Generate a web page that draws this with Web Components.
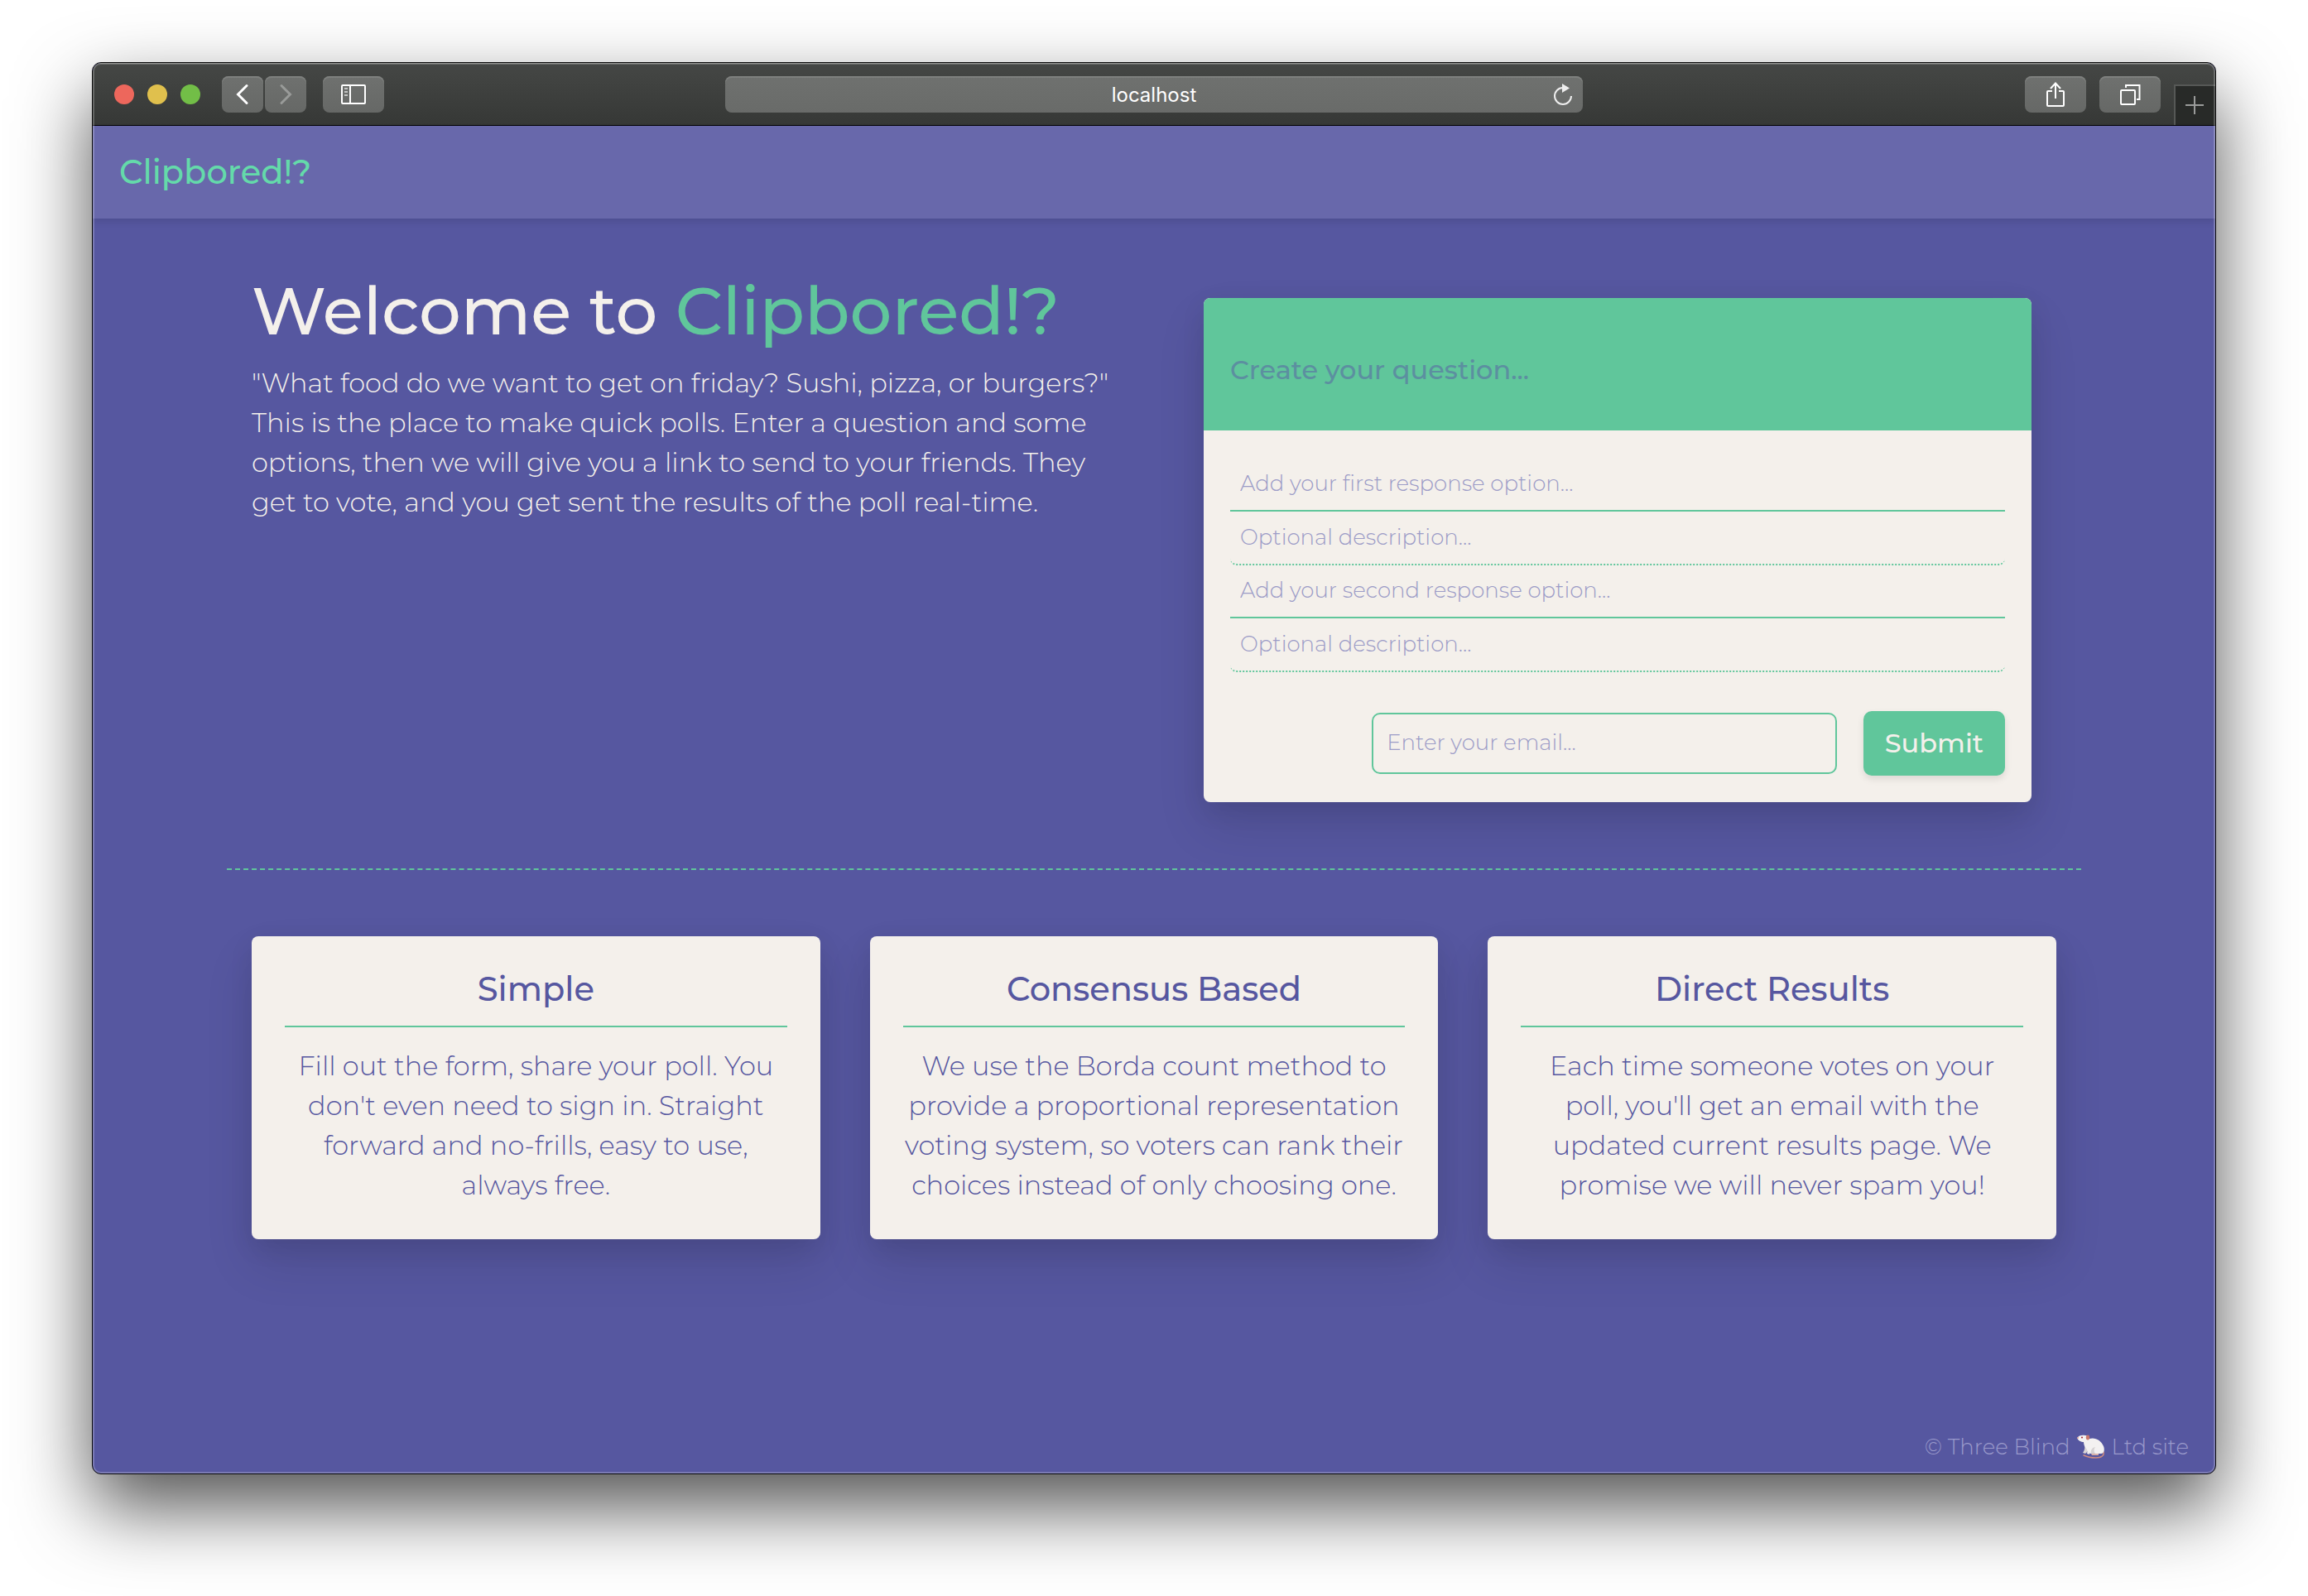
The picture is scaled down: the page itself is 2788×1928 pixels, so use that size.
<!DOCTYPE html>
<html lang="en">
<head>
<meta charset="utf-8">
<title>Clipbored!?</title>
<style>
  :root {
    --purple: #5657a0;
    --nav: #6868ab;
    --green: #60c69b;
    --mint: #64daaa;
    --cream: #f4f0eb;
    --placeholder: #9c9cc7;
    --card-shadow: 0 30px 60px rgba(0, 0, 0, .11), 0 10px 30px rgba(0, 0, 0, .08);
    --small-shadow: 0 4px 8px rgba(0, 0, 0, .1);
    --body-size: 32px;
    --title-size: 40px;
    --small-size: 26px;
  }
  body {
    margin: 0;
    min-height: 100vh;
    box-sizing: border-box;
    padding: 75px 111px 147px;
    display: flex;
    background: #fff;
    color: var(--cream);
    font-family: Montserrat, Inter, sans-serif;
    font-size: var(--body-size);
    font-weight: 300;
    line-height: 48px;
  }
</style>
</head>
<body>
<browser-window>
  <site-nav>Clipbored!?</site-nav>
  <page-hero>
    <span slot="lead">Welcome to</span>
    <span slot="brand">Clipbored!?</span>
    "What food do we want to get on friday? Sushi, pizza, or burgers?" This is the place to make quick polls. Enter a question and some options, then we will give you a link to send to your friends. They get to vote, and you get sent the results of the poll real-time.
    <poll-form slot="form"></poll-form>
  </page-hero>
  <feature-list>
    <feature-card><span slot="title">Simple</span>Fill out the form, share your poll. You don't even need to sign in. Straight forward and no-frills, easy to use, always free.</feature-card>
    <feature-card><span slot="title">Consensus Based</span>We use the Borda count method to provide a proportional representation voting system, so voters can rank their choices instead of only choosing one.</feature-card>
    <feature-card><span slot="title">Direct Results</span>Each time someone votes on your poll, you'll get an email with the updated current results page. We promise we will never spam you!</feature-card>
  </feature-list>
  <site-footer></site-footer>
</browser-window>

<script>
const define = (name, html) => {
  const template = document.createElement('template');
  template.innerHTML = html;
  customElements.define(name, class extends HTMLElement {
    constructor() {
      super();
      this.attachShadow({ mode: 'open' }).append(template.content.cloneNode(true));
    }
  });
};

define('browser-toolbar', `
<style>
  :host {
    display: grid; grid-template-columns: 1fr 1036px 1fr;
    height: 74px; align-items: center;
    background: linear-gradient(#454745, #363836);
    border-bottom: 1px solid #000;
    border-top: 1px solid #6d6f6c;
  }
  .left, .right { display: flex; align-items: center; }
  .left { padding-left: 26px; }
  .right { justify-content: flex-end; gap: 16px; align-self: stretch; }
  .light { width: 24px; height: 24px; border-radius: 50%; margin-right: 16px; }
  .red { background: #ed675c; } .yellow { background: #e0c04d; } .green { background: #72be47; }
  button {
    width: 74px; height: 44px; padding: 0; border: 0; border-radius: 8px;
    display: grid; place-items: center; color: #fff;
    background: linear-gradient(#6f716f, #666866);
    box-shadow: inset 0 2px 0 #7e807e;
  }
  .nav { width: 50px; }
  .back { margin-left: 10px; margin-right: 2px; }
  .side { margin-left: 20px; }
  .forward { color: #999b99; }
  .address {
    height: 44px; border-radius: 8px; box-sizing: border-box;
    display: grid; grid-template-columns: 48px 1fr 48px; align-items: center;
    background: linear-gradient(#6f716f, #696b69);
    box-shadow: inset 0 2px 0 #7e807e;
  }
  input {
    grid-column: 2; border: 0; padding: 2px 0 0; background: none; text-align: center; color: #fff;
    font: 400 24px/32px Inter, sans-serif; min-width: 0;
  }
  .reload { width: 48px; background: none; box-shadow: none; color: #eee; }
  .add {
    width: 50px; height: 49px; align-self: flex-end; border-radius: 0; color: #9a9b9a;
    background: #282a28; box-shadow: inset 2px 2px 0 #565856;
  }
  svg { fill: none; stroke: currentColor; stroke-width: 2; display: block; }
</style>
<div class="left">
  <span class="light red"></span><span class="light yellow"></span><span class="light green"></span>
  <button class="nav back" aria-label="Back"><svg width="24" height="26" viewBox="0 0 24 26" stroke-linecap="round"><path stroke-width="3" d="M17 2.500 6.500 13 17 23.500"/></svg></button>
  <button class="nav forward" aria-label="Forward"><svg width="24" height="26" viewBox="0 0 24 26" stroke-linecap="round"><path stroke-width="3" d="M7 2.500 17.500 13 7 23.500"/></svg></button>
  <button class="side" aria-label="Sidebar"><svg width="30" height="24" viewBox="0 0 30 24"><rect x="1" y="1" width="28" height="22" rx="1"/><path d="M11 1v22"/><path stroke="#c4c5c4" d="M4 5h4M4 9h4M4 13h4"/></svg></button>
</div>
<div class="address">
  <input type="text" aria-label="Address" value="localhost">
  <button class="reload" aria-label="Reload"><svg width="24" height="28" viewBox="0 0 24 28"><path d="M12 6a10 10 0 1 0 10 10"/><path fill="currentColor" stroke="none" d="M11 1v11l9-5.500z"/></svg></button>
</div>
<div class="right">
  <button aria-label="Share"><svg width="24" height="32" viewBox="0 0 24 32"><path d="M8 12H3q-1 0-1 1v16q0 1 1 1h18q1 0 1-1V13q0-1-1-1h-5M12 21V3M6 9l6-6.500L18 9"/></svg></button>
  <button aria-label="Tabs"><svg width="26" height="26" viewBox="0 0 26 26"><rect x="2" y="8" width="17" height="17" rx="1"/><path d="M8 5V2h16.500v17H21"/></svg></button>
  <button class="add" aria-label="New tab"><svg width="24" height="24" viewBox="0 0 24 24"><path d="M12 1v22M1 12h22"/></svg></button>
</div>`);

define('browser-window', `
<style>
  :host {
    flex: 1; min-width: 0; box-sizing: border-box; position: relative;
    display: flex; flex-direction: column; overflow: hidden;
    border: 1px solid #0b0b0b; border-radius: 11px; background: var(--purple);
    box-shadow: 0 40px 90px rgba(0, 0, 0, .68);
  }
  .rim {
    position: absolute; inset: 0; border-radius: 10px; pointer-events: none;
    box-shadow: inset 0 0 0 2px rgba(255, 255, 255, .22);
  }
</style>
<browser-toolbar></browser-toolbar>
<slot></slot>
<div class="rim"></div>`);

define('site-nav', `
<style>
  :host { display: flex; align-items: center; height: 112px; padding: 0 32px; background: var(--nav); box-shadow: var(--small-shadow); }
  a { color: var(--mint); text-decoration: none; font-size: var(--title-size); line-height: 48px; font-weight: 500; }
</style>
<a href="#"><slot></slot></a>`);

define('page-hero', `
<style>
  :host {
    width: 100%; max-width: 2240px; box-sizing: border-box; align-self: center;
    display: grid; grid-template-columns: 1fr 1fr; gap: 60px;
    padding: 64px 30px 80px; border-bottom: 2px dashed var(--green);
  }
  h1 { margin: 0 0 15px; font-size: 80px; line-height: 96px; font-weight: 500; white-space: nowrap; }
  .brand { color: var(--green); }
  p { margin: 0; }
  .form { padding: 32px 30px 0; }
</style>
<div>
  <h1><slot name="lead"></slot> <span class="brand"><slot name="brand"></slot></span></h1>
  <p><slot></slot></p>
</div>
<div class="form"><slot name="form"></slot></div>`);

define('poll-form', `
<style>
  :host { display: block; border-radius: 8px; box-shadow: var(--card-shadow); }
  form { border-radius: 8px; overflow: hidden; background: var(--cream); }
  header { background: var(--green); padding: 44px 32px 32px; }
  input {
    display: block; width: 100%; box-sizing: border-box; border: 0; outline: 0;
    background: none; color: var(--purple); font: inherit; font-size: var(--small-size);
  }
  input::placeholder { color: var(--placeholder); opacity: 1; }
  .question { height: 84px; padding: 0; font-size: var(--body-size); font-weight: 500; }
  .question::placeholder { color: #5c8fa0; }
  .body { padding: 34px 32px 32px; }
  .option, .detail { padding: 0 12px 2px; }
  .option { height: 64px; border-bottom: 2px solid var(--green); }
  .detail { height: 65px; border-bottom: 2px dotted var(--green); border-radius: 8px; }
  .send { display: flex; justify-content: flex-end; align-items: center; gap: 32px; margin-top: 47px; }
  .email { width: 60%; height: 74px; padding: 0 16px 2px; border: 2px solid var(--green); border-radius: 10px; }
  button {
    height: 78px; padding: 0 26px; border: 0; border-radius: 10px; background: var(--green);
    color: var(--cream); font: inherit; font-weight: 500; box-shadow: var(--small-shadow);
  }
</style>
<form>
  <header><input class="question" aria-label="Question" placeholder="Create your question..."></header>
  <div class="body">
    <input class="option" aria-label="First option" placeholder="Add your first response option...">
    <input class="detail" aria-label="First description" placeholder="Optional description...">
    <input class="option" aria-label="Second option" placeholder="Add your second response option...">
    <input class="detail" aria-label="Second description" placeholder="Optional description...">
    <div class="send">
      <input class="email" type="email" aria-label="Email" placeholder="Enter your email...">
      <button type="button">Submit</button>
    </div>
  </div>
</form>`);

define('feature-list', `
<style>
  :host {
    width: 100%; max-width: 2240px; box-sizing: border-box; align-self: center;
    display: grid; grid-template-columns: repeat(3, 1fr); gap: 60px; padding: 80px 30px;
  }
</style>
<slot></slot>`);

define('feature-card', `
<style>
  :host {
    display: block; padding: 40px 40px 41px; border-radius: 8px; background: var(--cream);
    color: var(--purple); text-align: center; box-shadow: var(--card-shadow);
  }
  h2 { margin: 0 0 23px; padding-bottom: 20px; border-bottom: 2px solid var(--green); font-size: var(--title-size); line-height: 48px; font-weight: 500; }
  p { margin: 0; }
</style>
<h2><slot name="title"></slot></h2>
<p><slot></slot></p>`);

define('site-footer', `
<style>
  :host { display: block; margin-top: auto; padding: 0 32px 12px; color: #9a9acb; font-size: var(--small-size); line-height: 40px; }
  footer { display: flex; justify-content: flex-end; align-items: center; gap: 8px; }
</style>
<footer>
  <span>© Three Blind</span>
  <svg width="34" height="30" viewBox="0 0 34 30" role="img" aria-label="rat">
    <path d="M32 21c1 4-2 7-9 7-6 0-11-1-15-3" fill="none" stroke="#d08c80" stroke-width="1.500" stroke-linecap="round"/>
    <path d="M9 12c1 4 0 7-2 10l3 1c3-2 4-6 5-10z" fill="#d9d4d4"/>
    <path d="M11 14c1 3 2 6 1 9l3 1 1-9z" fill="#eeeaea"/>
    <path d="M0 4C2 1 6 0 10 1c3 0 5 2 5 4 7-2 14 2 17 9 2 5 0 9-3 9H16c-1-1-3-2-4-5-3-3-4-6-4-9C5 9 1 7 0 4z" fill="#f3f1f1"/>
    <path d="M17 23c-1-4 1-7 5-8-2 3-2 5 0 8z" fill="#d5d2d3"/>
    <path d="M17 23h9v2h-8z" fill="#d9b0a8"/>
    <ellipse cx="13" cy="3.500" rx="2.200" ry="3" fill="#c9786c"/>
    <circle cx="6" cy="3.500" r="1" fill="#a11d2a"/>
    <circle cx="1" cy="4" r="1" fill="#d99a92"/>
  </svg>
  <span>Ltd site</span>
</footer>`);
</script>
</body>
</html>
